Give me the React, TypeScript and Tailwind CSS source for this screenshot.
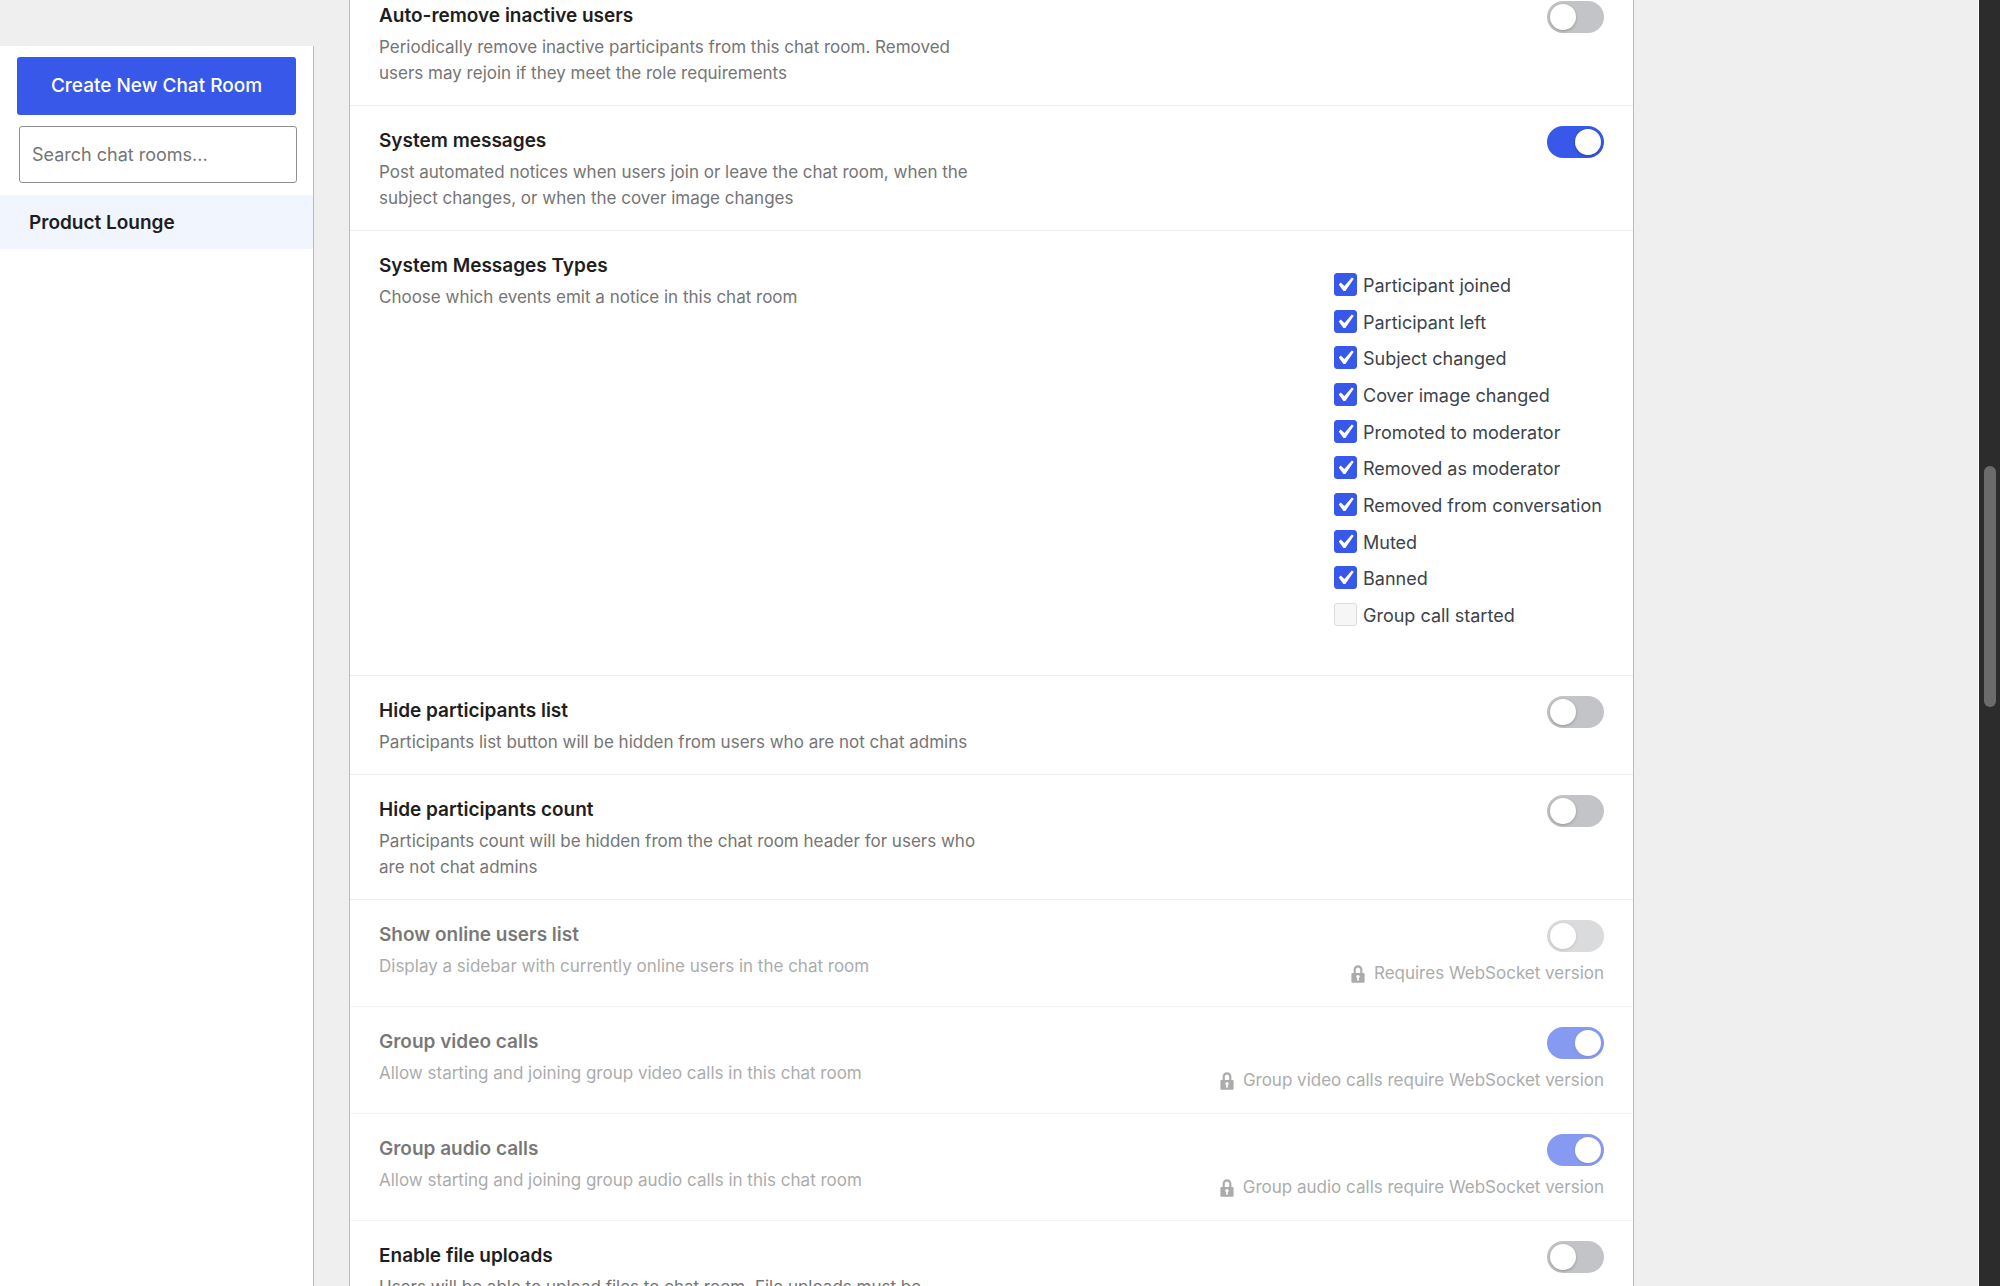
import React, { useState } from 'react';
import clsx from 'clsx';

interface Setting {
  id: string;
  title: string;
  description: string;
  enabled: boolean;
  notice?: string;
}

const generalSettings: Setting[] = [
  {
    id: 'auto-remove',
    title: 'Auto-remove inactive users',
    description: 'Periodically remove inactive participants from this chat room. Removed users may rejoin if they meet the role requirements',
    enabled: false
  },
  {
    id: 'system-messages',
    title: 'System messages',
    description: 'Post automated notices when users join or leave the chat room, when the subject changes, or when the cover image changes',
    enabled: true
  }
];

const participantSettings: Setting[] = [
  {
    id: 'hide-list',
    title: 'Hide participants list',
    description: 'Participants list button will be hidden from users who are not chat admins',
    enabled: false
  },
  {
    id: 'hide-count',
    title: 'Hide participants count',
    description: 'Participants count will be hidden from the chat room header for users who are not chat admins',
    enabled: false
  },
  {
    id: 'online-users',
    title: 'Show online users list',
    description: 'Display a sidebar with currently online users in the chat room',
    enabled: false,
    notice: 'Requires WebSocket version'
  },
  {
    id: 'video-calls',
    title: 'Group video calls',
    description: 'Allow starting and joining group video calls in this chat room',
    enabled: true,
    notice: 'Group video calls require WebSocket version'
  },
  {
    id: 'audio-calls',
    title: 'Group audio calls',
    description: 'Allow starting and joining group audio calls in this chat room',
    enabled: true,
    notice: 'Group audio calls require WebSocket version'
  },
  {
    id: 'file-uploads',
    title: 'Enable file uploads',
    description: 'Users will be able to upload files to chat room. File uploads must be',
    enabled: false
  }
];

const messageTypes = [
  { label: 'Participant joined', checked: true },
  { label: 'Participant left', checked: true },
  { label: 'Subject changed', checked: true },
  { label: 'Cover image changed', checked: true },
  { label: 'Promoted to moderator', checked: true },
  { label: 'Removed as moderator', checked: true },
  { label: 'Removed from conversation', checked: true },
  { label: 'Muted', checked: true },
  { label: 'Banned', checked: true },
  { label: 'Group call started', checked: false, disabled: true }
];

const LockIcon: React.FC = () => (
  <svg viewBox="0 0 20 20" className="size-[22px] shrink-0 fill-current" aria-hidden="true">
    <path d="M14 9h1c.55 0 1 .45 1 1v7c0 .55-.45 1-1 1H5c-.55 0-1-.45-1-1v-7c0-.55.45-1 1-1h1V6c0-2.21 1.79-4 4-4s4 1.79 4 4v3zm-2 0V6c0-1.1-.9-2-2-2s-2 .9-2 2v3h4zm-1 7l-.36-2.15c.51-.24.86-.75.86-1.35 0-.83-.67-1.5-1.5-1.5s-1.5.67-1.5 1.5c0 .6.35 1.11.86 1.35L9 16h2z" />
  </svg>
);

const Toggle: React.FC<{ id: string; defaultOn: boolean; disabled?: boolean }> = ({ id, defaultOn, disabled }) => {
  const [on, setOn] = useState(defaultOn);

  return (
    <span className="grid h-8 w-[57px] items-center">
      <input
        id={id}
        type="checkbox"
        role="switch"
        checked={on}
        disabled={disabled}
        onChange={() => setOn(!on)}
        className="peer col-start-1 row-start-1 h-8 w-[57px] appearance-none rounded-full bg-[#c3c4c7] checked:bg-[#3858e9]"
      />
      <span className="pointer-events-none col-start-1 row-start-1 ml-[3px] size-[26px] rounded-full bg-white shadow-[0_1px_3px_rgba(0,0,0,0.25)] peer-checked:ml-[28px]" />
    </span>
  );
};

const RowText: React.FC<{ title: string; description: string; htmlFor?: string }> = ({ title, description, htmlFor }) => (
  <div className="max-w-[610px]">
    {htmlFor ? (
      <label htmlFor={htmlFor} className="block text-[19px] leading-[30px] font-semibold text-[#1e1e1e]">{title}</label>
    ) : (
      <h3 className="text-[19px] leading-[30px] font-semibold text-[#1e1e1e]">{title}</h3>
    )}
    <p className="mt-[3px] text-[17px] leading-[26px] text-[#757575]">{description}</p>
  </div>
);

const SettingRow: React.FC<{ setting: Setting }> = ({ setting }) => (
  <div
    className={clsx(
      'flex items-start justify-between gap-6 border-b border-[#ededed] px-[29px] pt-5 pb-[19px]',
      setting.notice && 'opacity-60'
    )}
  >
    <RowText title={setting.title} description={setting.description} htmlFor={setting.id} />
    <div className="flex flex-col items-end">
      <Toggle id={setting.id} defaultOn={setting.enabled} disabled={!!setting.notice} />
      {setting.notice && (
        <p className="mt-2 flex items-center gap-[5px] text-[17px] leading-[27px] text-[#757575]">
          <LockIcon />
          {setting.notice}
        </p>
      )}
    </div>
  </div>
);

const MessageTypesRow: React.FC = () => (
  <div className="flex items-start justify-between gap-6 border-b border-[#ededed] px-[29px] pt-5 pb-[19px]">
    <RowText title="System Messages Types" description="Choose which events emit a notice in this chat room" />
    <div className="mt-[19px] mb-[26px] flex h-[360px] w-[270px] flex-col justify-between">
      {messageTypes.map((type) => (
        <label key={type.label} className="flex h-[30px] items-start gap-[6px] text-[18px] leading-[32px] text-[#3c434a]">
          <span className="mt-[3px] grid size-[23px] place-items-center">
            <input
              type="checkbox"
              defaultChecked={type.checked}
              disabled={type.disabled}
              className="peer col-start-1 row-start-1 size-[23px] appearance-none rounded-[3px] border border-[#8c8f94] bg-white checked:border-[#3858e9] checked:bg-[#3858e9] disabled:border-[#dcdcde] disabled:bg-[#f6f6f6]"
            />
            <svg viewBox="2.5 1.8 15.9 15.9" className="pointer-events-none invisible col-start-1 row-start-1 size-[23px] fill-white peer-checked:visible">
              <path d="M14.83 4.89l1.34.94-5.81 8.38H9.02L5.78 9.67l1.34-1.25 2.57 2.4z" />
            </svg>
          </span>
          {type.label}
        </label>
      ))}
    </div>
  </div>
);

const Sidebar: React.FC = () => (
  <aside className="mt-[46px] w-[314px] shrink-0 border-r border-[#b9bbbe] bg-white">
    <div className="px-[17px] pt-[11px] pb-3">
      <button type="button" className="h-[58px] w-full rounded-[3px] bg-[#3858e9] text-[19px] font-medium text-white">
        Create New Chat Room
      </button>
      <div className="mt-[11px] -mr-px ml-[2px]">
        <input
          type="search"
          aria-label="Search chat rooms"
          placeholder="Search chat rooms..."
          className="h-[57px] w-full rounded-[3px] border border-[#8c8f94] bg-white px-3 text-[18px] text-[#1e1e1e] placeholder:text-[#757575]"
        />
      </div>
    </div>
    <nav>
      <a href="#product-lounge" className="block bg-[#f0f5fe] px-[29px] pt-[13px] pb-[11px] text-[19px] leading-[30px] font-semibold text-[#1e1e1e]">
        Product Lounge
      </a>
    </nav>
  </aside>
);

export default function App() {
  return (
    <div className="flex h-screen overflow-hidden bg-[#efefef] font-[Inter,'Liberation_Sans',sans-serif]">
      <Sidebar />

      <main className="flex flex-1 items-start pl-[35px]">
        <section className="-mt-[19px] max-w-[1285px] flex-1 border-x border-[#b9bbbe] bg-white">
          {generalSettings.map((setting) => (
            <SettingRow key={setting.id} setting={setting} />
          ))}
          <MessageTypesRow />
          {participantSettings.map((setting) => (
            <SettingRow key={setting.id} setting={setting} />
          ))}
        </section>
      </main>

      {/* Scroll track */}
      <div className="w-[22px] shrink-0 border-l border-white bg-[#2c2c2c] pt-[466px] pl-[5px]">
        <div className="h-[241px] w-3 rounded-full bg-[#6b6b6b]" />
      </div>
    </div>
  );
}
